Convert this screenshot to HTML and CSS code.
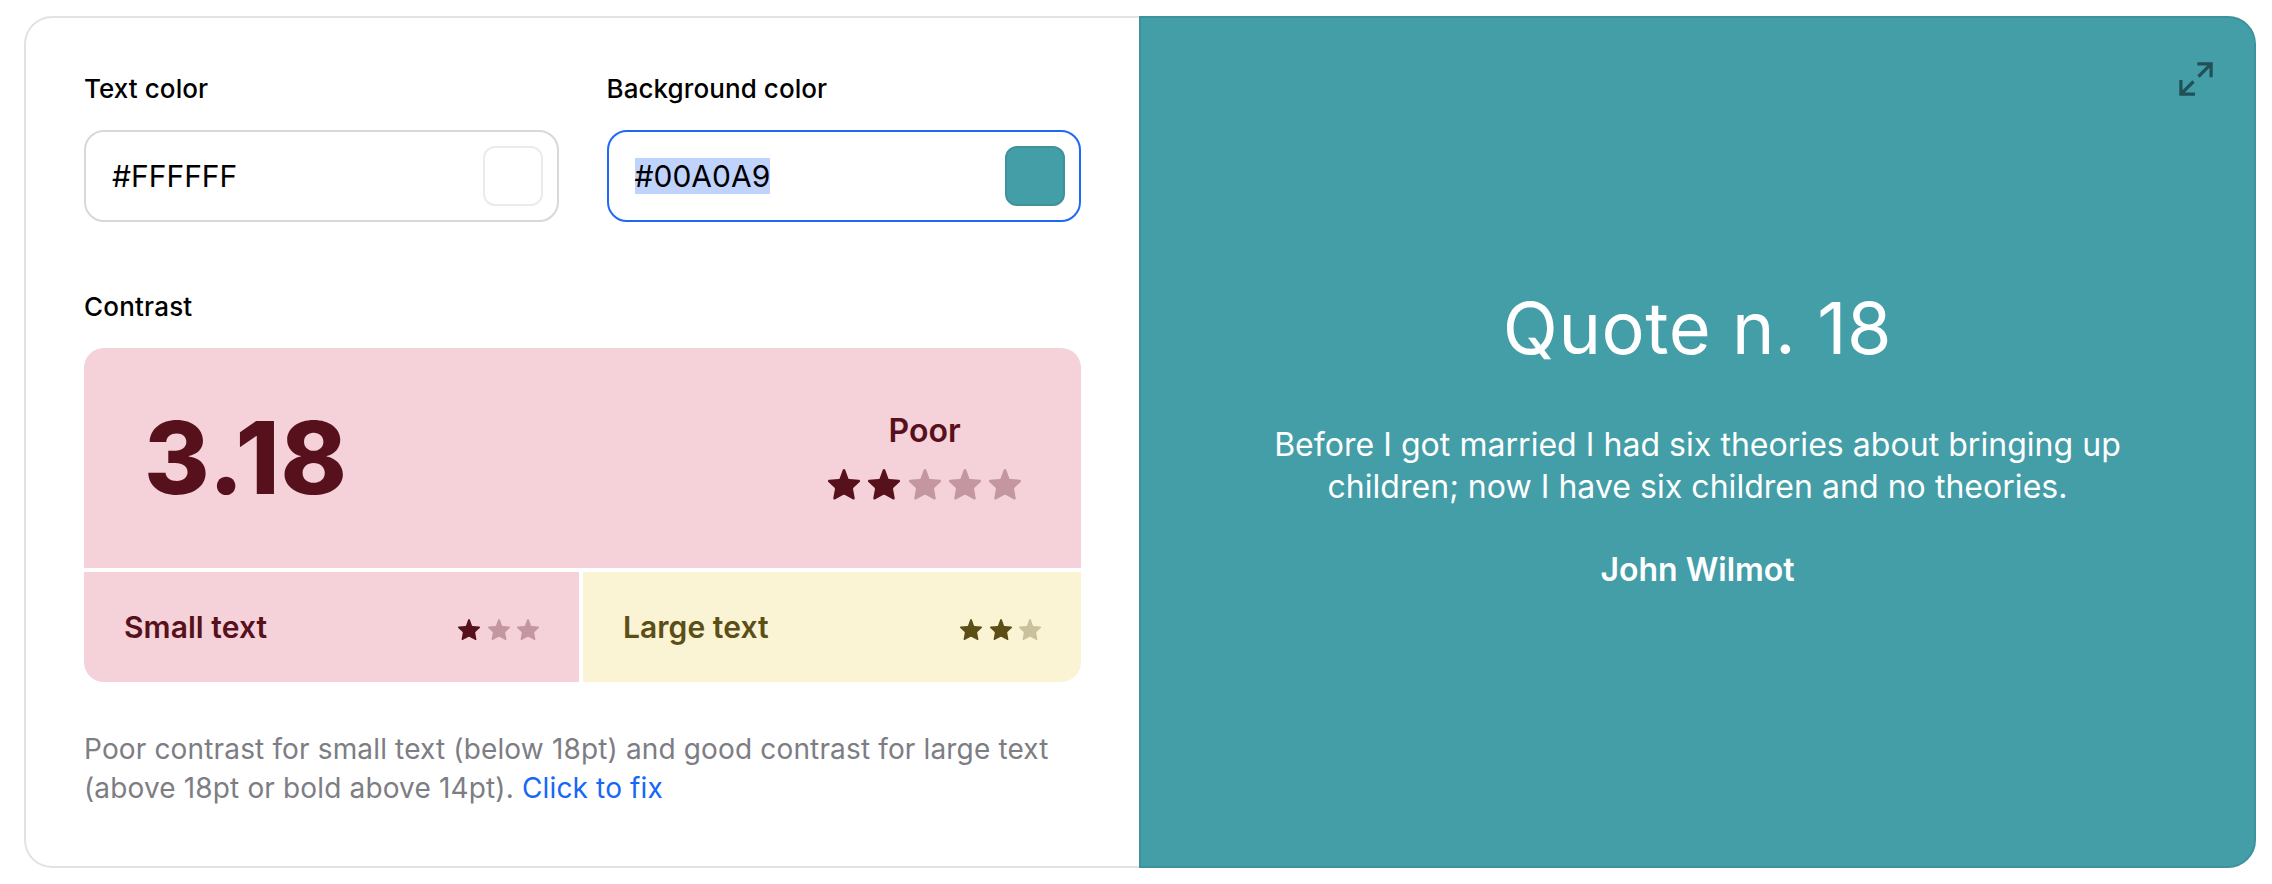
FILE: index.html
```html
<!DOCTYPE html>
<html lang="en">
<head>
<meta charset="utf-8">
<title>Color contrast checker</title>
<link rel="stylesheet" href="styles.css">
</head>
<body>
<svg class="defs" width="0" height="0" aria-hidden="true">
  <symbol id="star" viewBox="0 0 32 31"><path d="M14.700 1C15.200-.3 16.800-.3 17.300 1L20.300 9.200Q20.600 10 21.500 10.100L30.900 10.700C32.200 10.800 32.500 12.200 31.600 12.900L25.700 18.500C25.100 19.100 25 19.600 25.100 20.300L26.700 29C26.800 30.300 25.700 30.800 24.700 30.200L17 26.100Q16 25.600 15 26.100L7.300 30.200C6.300 30.800 5.200 30.300 5.300 29L6.900 20.300C7 19.600 6.900 19.100 6.300 18.500L.4 12.900C-.5 12.200-.2 10.800 1.100 10.700L10.500 10.100Q11.400 10 11.700 9.200Z"/></symbol>
</svg>
<main class="card">
  <section class="controls">
    <div class="fields">
      <div class="field">
        <label class="label">Text color</label>
        <div class="input"><span class="value">#FFFFFF</span><span class="swatch swatch-text"></span></div>
      </div>
      <div class="field">
        <label class="label">Background color</label>
        <div class="input input-focus"><span class="value"><span class="selected">#00A0A9</span></span><span class="swatch swatch-bg"></span></div>
      </div>
    </div>
    <div class="label contrast-label">Contrast</div>
    <div class="result">
      <div class="score red">
        <span class="ratio">3.18</span>
        <div class="rating">
          <span class="verdict">Poor</span>
          <div class="stars large"><svg><use href="#star"/></svg><svg><use href="#star"/></svg><svg class="off"><use href="#star"/></svg><svg class="off"><use href="#star"/></svg><svg class="off"><use href="#star"/></svg></div>
        </div>
      </div>
      <div class="row">
        <div class="cell red"><span>Small text</span><div class="stars"><svg><use href="#star"/></svg><svg class="off"><use href="#star"/></svg><svg class="off"><use href="#star"/></svg></div></div>
        <div class="cell yellow"><span>Large text</span><div class="stars"><svg><use href="#star"/></svg><svg><use href="#star"/></svg><svg class="off"><use href="#star"/></svg></div></div>
      </div>
    </div>
    <p class="help">Poor contrast for small text (below 18pt) and good contrast for large text<br>(above 18pt or bold above 14pt). <a class="link">Click to fix</a></p>
  </section>
  <section class="preview">
    <svg class="expand" viewBox="0 0 36 36"><path d="M19.300 2.900H33.100V16.300M33.100 2.900 20.500 15.500M2.900 19V33.100H17M2.900 33.100 15.500 20.500"/></svg>
    <h1 class="title">Quote n. 18</h1>
    <p class="quote">Before I got married I had six theories about bringing up<br>children; now I have six children and no theories.</p>
    <p class="author">John Wilmot</p>
  </section>
</main>
</body>
</html>
```
FILE: styles.css
```css
* { box-sizing: border-box; }
body { margin: 0; padding: 16px 16px 0 24px; background: #fff; color: #000; font-family: Inter, sans-serif; }
h1, p { margin: 0; }
.defs { display: none; }
.card { display: flex; width: 2232px; height: 852px; }
.controls { width: 1115px; border: 2px solid #e2e2e2; border-right: 0; border-radius: 28px 0 0 28px; padding: 55px 58px 0; }
.fields { display: flex; gap: 48px; }
.field { flex: 1; }
.label { display: block; font-size: 26px; line-height: 32px; font-weight: 500; letter-spacing: .08px; }
.input { display: flex; align-items: center; justify-content: space-between; height: 92px; margin-top: 25px; padding: 0 14px 0 26px; border: 2px solid #d8d8d8; border-radius: 20px; }
.input-focus { border-color: #1f69f6; }
.value { font-size: 30px; line-height: 36px; }
.selected { display: block; background: #c0d3fd; }
.swatch { width: 60px; height: 60px; border: 2px solid #ebebeb; border-radius: 12px; }
.swatch-bg { background: #439ea8; border-color: #3e929b; }
.contrast-label { margin-top: 69px; letter-spacing: .2px; }
.result { display: grid; gap: 4px; margin-top: 25px; border-radius: 20px; overflow: hidden; }
.red { background: #f5d1d9; color: #57111c; }
.yellow { background: #faf4d5; color: #5b4f17; }
.score { display: flex; justify-content: space-between; align-items: center; height: 220px; padding: 0 60px; }
.ratio { font-size: 100px; line-height: 120px; font-weight: 800; letter-spacing: .9px; }
.rating { display: flex; flex-direction: column; align-items: center; gap: 18px; padding-bottom: 5px; }
.verdict { font-size: 32px; line-height: 40px; font-weight: 600; }
.row { display: grid; grid-template-columns: 495px 1fr; gap: 4px; }
.cell { display: flex; justify-content: space-between; align-items: center; height: 110px; padding: 0 40px; font-size: 30px; line-height: 36px; font-weight: 600; letter-spacing: .06px; }
.stars { display: flex; gap: 7.5px; padding-top: 6px; }
.stars svg { width: 22px; height: 21.500px; fill: currentColor; }
.large { gap: 8.200px; padding: 0; }
.large svg { width: 32px; height: 31px; }
.stars .off { opacity: .3; }
.help { margin-top: 48px; font-size: 28px; line-height: 39px; letter-spacing: .15px; color: #7d7d84; white-space: nowrap; }
.link { color: #1767f7; }
.preview { position: relative; width: 1117px; border: 2px solid #3e929b; border-radius: 0 28px 28px 0; background: #439ea8; color: #fff; text-align: center; padding-top: 266px; }
.expand { position: absolute; top: 43px; right: 40px; width: 36px; height: 36px; fill: none; stroke: #215057; stroke-width: 3.200; }
.title { font-size: 72px; line-height: 88px; font-weight: 400; letter-spacing: .55px; }
.quote { margin-top: 52px; font-size: 32px; line-height: 42px; letter-spacing: .04px; white-space: nowrap; }
.author { margin-top: 41px; font-size: 32px; line-height: 42px; font-weight: 600; }
```
